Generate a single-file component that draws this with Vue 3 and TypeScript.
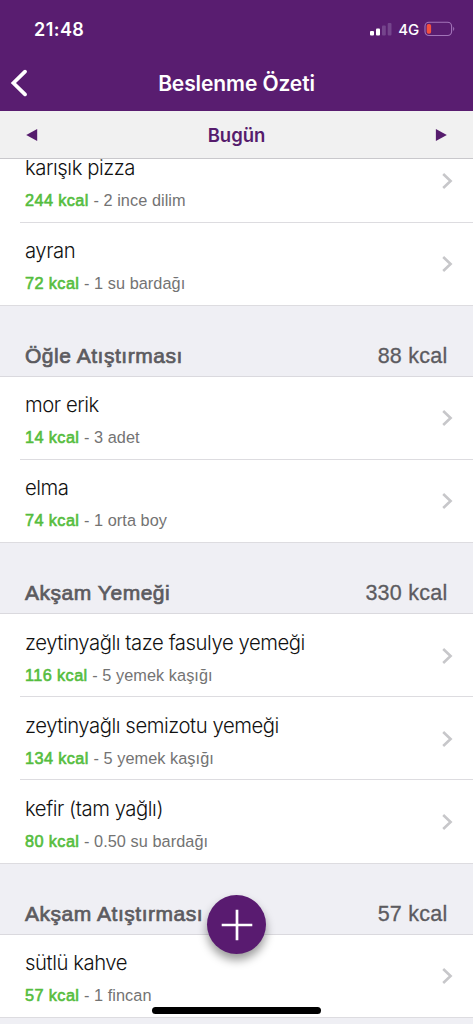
<script setup lang="ts">
interface Food {
  name: string
  kcal: number
  portion: string
}

interface Meal {
  title: string
  kcal: number
  foods: Food[]
}

const previous: Food[] = [
  { name: 'karışık pizza', kcal: 244, portion: '2 ince dilim' },
  { name: 'ayran', kcal: 72, portion: '1 su bardağı' },
]

const meals: Meal[] = [
  { title: '', kcal: 0, foods: previous },
  {
    title: 'Öğle Atıştırması',
    kcal: 88,
    foods: [
      { name: 'mor erik', kcal: 14, portion: '3 adet' },
      { name: 'elma', kcal: 74, portion: '1 orta boy' },
    ],
  },
  {
    title: 'Akşam Yemeği',
    kcal: 330,
    foods: [
      { name: 'zeytinyağlı taze fasulye yemeği', kcal: 116, portion: '5 yemek kaşığı' },
      { name: 'zeytinyağlı semizotu yemeği', kcal: 134, portion: '5 yemek kaşığı' },
      { name: 'kefir (tam yağlı)', kcal: 80, portion: '0.50 su bardağı' },
    ],
  },
  {
    title: 'Akşam Atıştırması',
    kcal: 57,
    foods: [{ name: 'sütlü kahve', kcal: 57, portion: '1 fincan' }],
  },
]
</script>

<template>
  <div class="screen">
    <header class="top">
      <div class="status">
        <span class="time">21:48</span>
        <div class="indicators">
          <svg class="signal" width="23" height="14" viewBox="0 0 23 14">
            <rect x="1" y="9" width="4" height="4.6" rx="1" fill="#fff" />
            <rect x="7" y="6.4" width="4" height="7.2" rx="1" fill="#fff" />
            <rect x="13" y="3.6" width="3.8" height="10" rx="1" fill="#75458c" />
            <rect x="18.7" y="1" width="3.8" height="12.6" rx="1" fill="#75458c" />
          </svg>
          <span class="network">4G</span>
          <svg class="battery" width="32" height="16" viewBox="0 0 32 16">
            <rect x="1" y="1.3" width="26.6" height="13.2" rx="4" fill="none" stroke="#a274b8" stroke-width="1.1" />
            <rect x="2.7" y="3" width="4.4" height="9.8" rx="1.8" fill="#f4503f" />
            <path d="M29.2 5.8Q31.4 7.9 29.2 10Z" fill="#a274b8" />
          </svg>
        </div>
      </div>
      <div class="nav">
        <svg class="back" width="18" height="28" viewBox="0 0 18 28">
          <path d="M15 2.6L3.4 14L15 25.4" fill="none" stroke="#fff" stroke-width="3.7" stroke-linecap="round" stroke-linejoin="miter" />
        </svg>
        <h1>Beslenme Özeti</h1>
      </div>
    </header>

    <div class="datebar">
      <svg width="12" height="12" viewBox="0 0 12 12"><path d="M.2 6L11.2 0V12Z" fill="#561c6d" /></svg>
      <span>Bugün</span>
      <svg width="12" height="12" viewBox="0 0 12 12"><path d="M11.8 6L.9 0V12Z" fill="#561c6d" /></svg>
    </div>

    <main class="viewport">
      <div class="list">
        <section v-for="meal in meals" :key="meal.title" class="meal">
          <div v-if="meal.title" class="meal-head">
            <h2>{{ meal.title }}</h2>
            <span class="total">{{ meal.kcal }} kcal</span>
          </div>
          <div v-for="food in meal.foods" :key="food.name" class="row">
            <div class="info">
              <div class="name">{{ food.name }}</div>
              <div class="detail"><b>{{ food.kcal }} kcal</b> - {{ food.portion }}</div>
            </div>
            <svg class="chevron" width="12" height="18" viewBox="0 0 12 18">
              <path d="M2.2 2L9.6 9L2.2 16" fill="none" stroke="#c7c7ca" stroke-width="2.6" />
            </svg>
          </div>
        </section>
      </div>
    </main>

    <button class="add" aria-label="Ekle">
      <svg width="32" height="32" viewBox="0 0 32 32">
        <path d="M16 .7V31.3M.7 16H31.3" stroke="#fff" stroke-width="2.7" />
      </svg>
    </button>
    <div class="home"></div>
  </div>
</template>

<style>
body {
  background: #efeff4;
}
</style>

<style scoped>
.screen {
  position: relative;
  display: flex;
  flex-direction: column;
  width: 473px;
  height: 1024px;
  overflow: hidden;
  background: #efeff4;
  font-family: "Liberation Sans", sans-serif;
}
.top {
  flex: none;
  height: 111px;
  background: #591d70;
  color: #fff;
  font-family: Inter, sans-serif;
}
.status {
  display: flex;
  align-items: center;
  justify-content: space-between;
  height: 58px;
  padding: 0 17px 0 34px;
}
.time {
  font-size: 18px;
  font-weight: 600;
  letter-spacing: 0.45px;
}
.indicators {
  display: flex;
  align-items: center;
}
.network {
  margin: 0 5px 0 6px;
  font-size: 15px;
  font-weight: 500;
  letter-spacing: -0.2px;
}
.nav {
  display: grid;
  grid-template-columns: 40px 1fr 40px;
  align-items: center;
  height: 50px;
}
.back {
  margin-left: 10px;
}
h1 {
  margin: 0;
  font-size: 21px;
  font-weight: 600;
  letter-spacing: -0.1px;
  text-align: center;
}
.datebar {
  display: flex;
  flex: none;
  align-items: center;
  justify-content: space-between;
  box-sizing: border-box;
  height: 48px;
  padding: 0 26px;
  border-bottom: 1px solid #c9c8cc;
  background: #f1f1f1;
  color: #561c6d;
  font-family: Inter, sans-serif;
  font-size: 18.5px;
  font-weight: 600;
}
.viewport {
  flex: 1;
  min-height: 0;
  overflow: hidden;
}
.list {
  margin-top: -19.7px;
}
.meal-head {
  display: flex;
  align-items: flex-end;
  justify-content: space-between;
  box-sizing: border-box;
  height: 71px;
  padding: 0 25.5px 8px 25px;
  border-bottom: 1px solid #dad9de;
  color: #5c5b60;
  font-size: 21.5px;
  line-height: 24px;
}
h2 {
  margin: 0;
  font-size: 21px;
  font-weight: 400;
  letter-spacing: 0.53px;
  -webkit-text-stroke: 0.7px #5c5b60;
}
.total {
  letter-spacing: 0.25px;
  -webkit-text-stroke: 0.3px #5c5b60;
}
.row {
  display: flex;
  align-items: center;
  position: relative;
  box-sizing: border-box;
  height: 83.2px;
  padding: 0 20px 0 25px;
  background: #fff;
}
.row::after {
  content: "";
  position: absolute;
  left: 20px;
  right: 0;
  bottom: 0;
  height: 1px;
  background: #dddce0;
}
.row:last-child::after {
  left: 0;
}
.info {
  flex: 1;
  padding-top: 3px;
}
.name {
  color: #111;
  font-family: Inter, "Liberation Sans", sans-serif;
  font-size: 20.3px;
  font-weight: 300;
  letter-spacing: -0.44px;
  line-height: 28px;
}
.detail {
  margin-top: 7px;
  color: #737373;
  font-size: 16.3px;
  letter-spacing: 0.06px;
  line-height: 22px;
}
.detail b {
  color: #55bd3e;
  font-weight: 400;
  letter-spacing: 0.4px;
  -webkit-text-stroke: 0.6px #55bd3e;
}
.add {
  position: absolute;
  left: 207px;
  top: 895px;
  display: grid;
  place-items: center;
  width: 59px;
  height: 59px;
  padding: 0;
  border: 0;
  border-radius: 50%;
  background: #591b70;
  box-shadow: 0 6px 10px rgba(0, 0, 0, 0.4);
}
.home {
  position: absolute;
  left: 152px;
  top: 1007px;
  width: 169px;
  height: 7px;
  border-radius: 4px;
  background: #000;
}
</style>
